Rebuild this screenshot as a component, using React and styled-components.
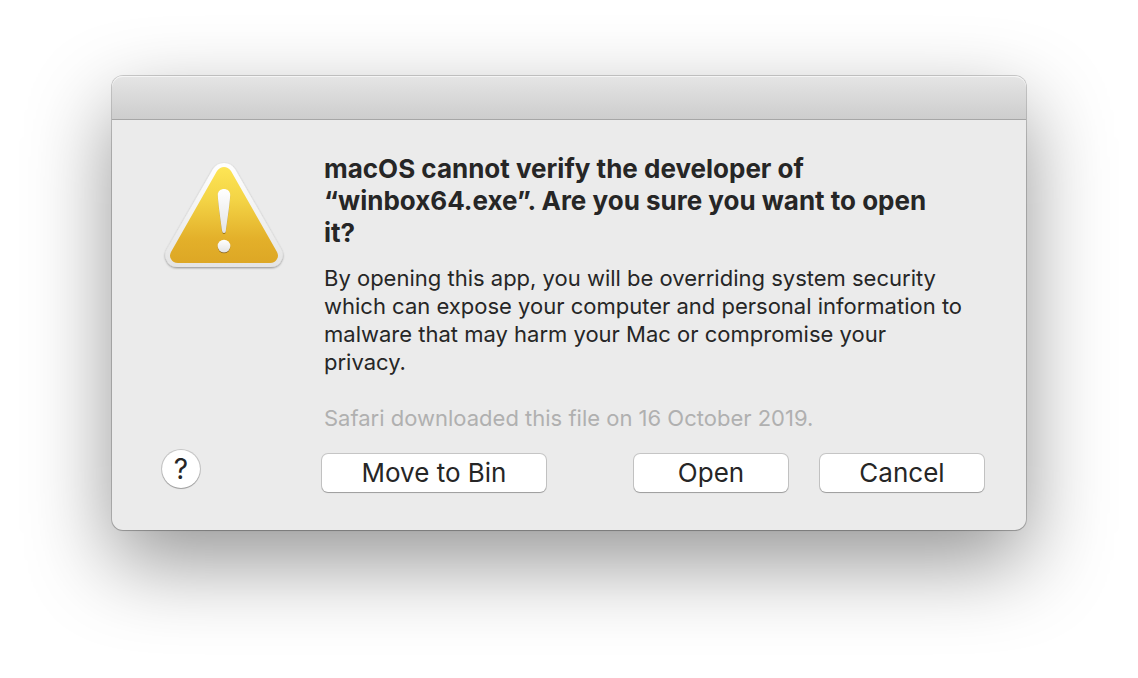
import React from "react";
import styled, { createGlobalStyle } from "styled-components";

const GlobalStyle = createGlobalStyle`
  * { box-sizing: border-box; }
  body {
    margin: 0;
    background: #fff;
    color: #262626;
    font-family: Inter, "Liberation Sans", sans-serif;
  }
`;

const Desktop = styled.div`
  min-height: 100vh;
  padding: 76px 112px;
  overflow: hidden;
`;

const Dialog = styled.main`
  border-radius: 11px;
  background: #ebebeb;
  box-shadow:
    0 0 0 1px rgba(0, 0, 0, 0.18),
    0 1px 1px rgba(0, 0, 0, 0.12),
    0 32px 84px rgba(0, 0, 0, 0.42);
`;

const TitleBar = styled.header`
  height: 44px;
  border-radius: 11px 11px 0 0;
  border-bottom: 1px solid #a6a6a6;
  background: linear-gradient(#e5e5e5, #cdcdcd);
  box-shadow: inset 0 1px 0 #f5f5f5;
`;

const Content = styled.div`
  display: grid;
  grid-template-columns: 110px 1fr;
  column-gap: 50px;
  padding: 33px 42px 38px 50px;
`;

const WarningIcon = styled.svg`
  width: 124px;
  height: 116px;
  margin-top: 5px;
`;

const Message = styled.div`
  padding: 0 16px 0 2px;
`;

const Title = styled.h1`
  margin: 0 0 15px;
  padding-right: 16px;
  font-size: 26px;
  line-height: 32px;
  font-weight: 700;
`;

const Text = styled.p`
  margin: 0 0 28px;
  font-size: 22px;
  line-height: 28px;
`;

const Note = styled(Text)`
  margin-bottom: 22px;
  color: #b0b0b0;
`;

const Actions = styled.div`
  display: flex;
  gap: 32px;
`;

const Button = styled.button`
  width: ${(p) => p.$width}px;
  height: 38px;
  margin-right: ${(p) => (p.$apart ? "auto" : 0)};
  padding: 0;
  border: 0;
  border-radius: 6px;
  background: #fff;
  color: #262626;
  font: 400 26px/38px Inter, "Liberation Sans", sans-serif;
  box-shadow: 0 0 0 1px rgba(0, 0, 0, 0.16), 0 1px 1px rgba(0, 0, 0, 0.2);
`;

const HelpButton = styled(Button)`
  width: 38px;
  border-radius: 50%;
  margin-top: -4px;
  font-size: 28px;
`;

function Warning() {
  return (
    <WarningIcon viewBox="0 0 124 116" role="img" aria-label="Warning">
      <defs>
        <linearGradient id="rim" x1="0" y1="0" x2="0" y2="1">
          <stop offset="0" stopColor="#ffffff" />
          <stop offset="1" stopColor="#e4e4e4" />
        </linearGradient>
        <linearGradient id="face" x1="0" y1="0" x2="0" y2="1">
          <stop offset="0" stopColor="#fde555" />
          <stop offset="0.35" stopColor="#f3d345" />
          <stop offset="0.75" stopColor="#e3b02a" />
          <stop offset="1" stopColor="#dda725" />
        </linearGradient>
        <filter id="rimShadow" x="-10%" y="-10%" width="120%" height="120%">
          <feDropShadow dx="0" dy="1" stdDeviation="1" floodOpacity="0.4" />
        </filter>
        <filter id="markShadow" x="-30%" y="-10%" width="160%" height="125%">
          <feDropShadow dx="0" dy="1" stdDeviation="0.6" floodColor="#6b4a00" floodOpacity="0.65" />
        </filter>
      </defs>
      <path
        filter="url(#rimShadow)"
        fill="url(#rim)"
        d="M51 11 Q55 5 62 5 Q69 5 73 11 L119 91 Q122 96 120 101 Q117 109 109 109 H15 Q7 109 4 101 Q2 96 5 91 Z"
      />
      <path
        fill="url(#face)"
        d="M55 13 Q58 9 62 9 Q66 9 69 13 L115 94 Q117 98 115 101 Q113 105 108 105 H16 Q11 105 9 101 Q7 98 9 94 Z"
      />
      <g filter="url(#markShadow)" fill="url(#rim)">
        <path d="M55.8 37 C55.8 29 68.2 29 68.2 37 C68.2 42 65.3 63 63.8 73 Q63.5 75 62 75 Q60.5 75 60.2 73 C58.7 63 55.8 42 55.8 37 Z" />
        <circle cx="62" cy="88" r="6.3" />
      </g>
    </WarningIcon>
  );
}

export default function App() {
  return (
    <>
      <GlobalStyle />
      <Desktop>
        <Dialog role="alertdialog" aria-labelledby="title" aria-describedby="message">
          <TitleBar />
          <Content>
            <Warning />
            <Message>
              <Title id="title">
                macOS cannot verify the developer of “winbox64.exe”. Are you sure you want to open it?
              </Title>
              <Text id="message">
                By opening this app, you will be overriding system security which can expose your
                computer and personal information to malware that may harm your Mac or compromise
                your privacy.
              </Text>
              <Note>Safari downloaded this file on 16 October 2019.</Note>
            </Message>
            <HelpButton type="button" aria-label="Help">?</HelpButton>
            <Actions>
              <Button type="button" $width={224} $apart>Move to Bin</Button>
              <Button type="button" $width={154}>Open</Button>
              <Button type="button" $width={164}>Cancel</Button>
            </Actions>
          </Content>
        </Dialog>
      </Desktop>
    </>
  );
}
